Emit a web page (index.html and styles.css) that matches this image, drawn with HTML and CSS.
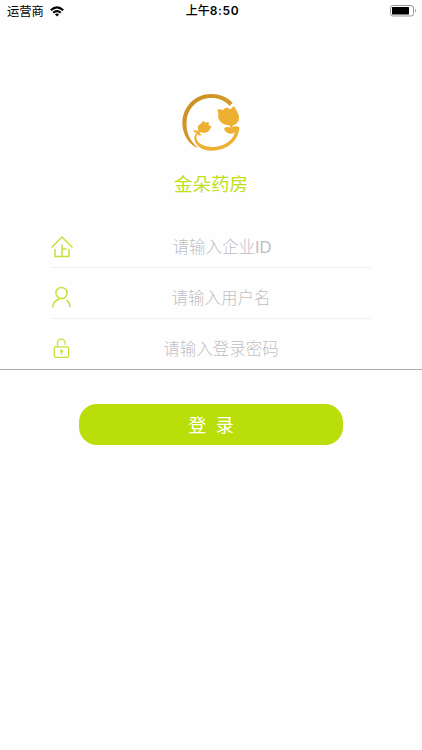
FILE: index.html
```html
<!DOCTYPE html>
<html lang="zh-CN">
<head>
<meta charset="utf-8">
<title>金朵药房</title>
<link rel="stylesheet" href="styles.css">
</head>
<body>
<header class="status">
  <div class="carrier">
    <span>运营商</span>
    <svg class="wifi" width="14" height="11" viewBox="0 0 14 11" fill="none" stroke="#000" stroke-width="2.2">
      <path d="M.8 4.2Q7-1.5 13.2 4.2M3.2 6.8Q7 3.3 10.8 6.8"/>
      <path d="M4.9 8.3Q7 6.6 9.1 8.3L7 10.5Z" fill="#000" stroke="none"/>
    </svg>
  </div>
  <div class="time"><span>上午</span><b>8:50</b></div>
  <svg class="battery" width="28" height="12" viewBox="0 0 28 12">
    <rect x=".5" y=".5" width="23" height="10.5" rx="2.5" fill="#fff" stroke="#999"/>
    <rect x="2" y="2" width="17" height="7.5" rx=".5"/>
    <path d="M25 4Q27 5.7 25 7.5Z" fill="#999"/>
  </svg>
</header>
<main class="login">
  <svg class="logo" width="78" height="74" viewBox="0 0 234 222">
    <defs>
      <linearGradient id="gold" x1="0" y1="0" x2="1" y2="1">
        <stop offset="0" stop-color="#c88e24"/>
        <stop offset="1" stop-color="#e0a42d"/>
      </linearGradient>
    </defs>
    <path d="M78 187C48 174 30 142 31 107C34 61 70 24 116 24C144 24 166 33 182 50L173 60C158 44 140 36 118 36C77 36 47 66 44 105C41 139 54 163 78 187Z" fill="url(#gold)"/>
    <g fill="#edb032">
      <path d="M136 71C143 69 149 70 153 73L160 65C167 65 172 67 176 70L185 60C191 68 195 76 200 87C204 104 195 116 183 118L181 124C187 120 195 120 202 124C200 136 186 144 174 143C165 142 158 137 156 127C163 121 170 122 175 126L173 118C148 116 136 102 139 86C139 80 138 75 136 71Z"/>
      <path d="M202 124C201 164 164 195 119 194C88 193 70 179 67 158C67 149 70 143 75 139C69 141 66 139 64 134C69 131 75 133 80 136C76 127 76 119 85 115L94 104L100 110L110 107L110 118L119 122C113 128 112 139 99 140C92 141 87 139 83 137C82 141 85 144 90 147C82 150 78 147 77 143C72 148 72 157 77 166C86 178 103 183 121 183C157 183 185 163 191 132Z"/>
    </g>
  </svg>
  <h1 class="name">金朵药房</h1>
  <form class="form">
    <label class="field">
      <svg width="22" height="23" viewBox="0 0 22 23" fill="none" stroke="#c2e335" stroke-width="1.5">
        <path d="M.5 12.5L11 2L21.5 12.5M4 14V21.5H18V14M11 21V9.5M11 14H15.5"/>
      </svg>
      <input class="org" type="text" placeholder="请输入企业ID">
    </label>
    <label class="field">
      <svg width="22" height="23" viewBox="0 0 22 23" fill="none" stroke="#c2e335" stroke-width="1.5">
        <circle cx="10.5" cy="7" r="5.6"/>
        <path d="M1.8 21.5C2 17 4.5 14.2 8.5 13M15.5 14.2Q19 16.8 18.9 21.2"/>
      </svg>
      <input type="text" placeholder="请输入用户名">
    </label>
    <label class="field last">
      <svg width="22" height="23" viewBox="0 0 22 23" fill="none" stroke="#c2e335" stroke-width="1.3">
        <rect x="3.2" y="9.8" width="14.4" height="10.6" rx="1.8"/>
        <path d="M6.5 9.8V6.2C6.5 .9 14.2 .9 14.2 6V7.8"/>
        <path d="M10.5 15.3V17.6" stroke-width="1.5"/>
        <circle cx="10.5" cy="14.1" r="1.5" fill="#c2e335" stroke="none"/>
      </svg>
      <input type="password" placeholder="请输入登录密码">
    </label>
    <hr class="rule">
    <button class="submit" type="button">登 录</button>
  </form>
</main>
</body>
</html>
```
FILE: styles.css
```css
* { box-sizing: border-box; }
body {
  margin: 0;
  background: #fefefe;
  font-family: "Liberation Sans", "Noto Sans CJK SC", sans-serif;
}
.status {
  display: grid;
  grid-template-columns: 1fr auto 1fr;
  align-items: center;
  height: 22px;
  padding: 0 4px 0 7px;
  color: #000;
}
.carrier {
  display: flex;
  align-items: center;
  gap: 6px;
  font-size: 12.3px;
  line-height: 20px;
}
.carrier span { padding-top: 1px; }
.time {
  display: flex;
  font: 500 12px/20px Inter, "Noto Sans CJK SC", sans-serif;
}
.time b {
  font-weight: 600;
  letter-spacing: .6px;
}
.battery { justify-self: end; }
.login {
  display: flex;
  flex-direction: column;
  align-items: center;
  padding-top: 64px;
}
.logo { display: block; }
.name {
  margin: 11px 0 0;
  color: #bfe01b;
  font-size: 18.5px;
  font-weight: 400;
  line-height: 28px;
}
.form {
  display: flex;
  flex-direction: column;
  align-items: center;
  width: 100%;
  padding-top: 18px;
}
.field {
  display: flex;
  align-items: center;
  width: 321px;
  height: 51px;
  padding-top: 8px;
  border-bottom: 1px solid #f1f1f1;
}
.field.last {
  height: 50px;
  border-bottom: 0;
}
.field input {
  flex: 1;
  min-width: 0;
  height: 42px;
  padding: 2px 2px 0 0;
  border: 0;
  outline: 0;
  background: transparent;
  font: 300 16.5px "Liberation Sans", "Noto Sans CJK SC", sans-serif;
  text-align: center;
}
.field .org { padding-right: 0; }
.field input::placeholder { color: #bfbfc5; opacity: 1; }
.rule {
  width: 100%;
  height: 1px;
  margin: 0;
  border: 0;
  background: #adadad;
}
.submit {
  width: 264px;
  height: 41px;
  margin-top: 34px;
  padding: 0 0 2px;
  border: 0;
  border-radius: 18px;
  background: #bade09;
  color: #fff;
  font: 400 18px "Liberation Sans", "Noto Sans CJK SC", sans-serif;
  word-spacing: 4.5px;
}
```
